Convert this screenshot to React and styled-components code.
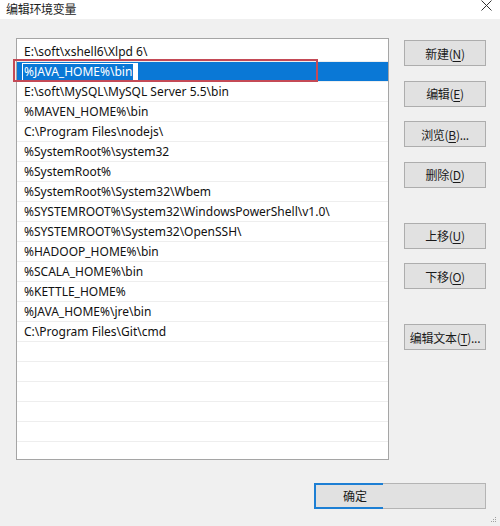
import React from "react";
import styled, { createGlobalStyle } from "styled-components";

const Global = createGlobalStyle`
  html, body { margin: 0; padding: 0; }
  body {
    width: 500px;
    height: 526px;
    overflow: hidden;
    background: #f0f0f0;
    font-family: "Noto Sans", "Noto Sans CJK SC", sans-serif;
    color: #000;
  }
`;

const Window = styled.div`
  position: relative;
  width: 500px;
  height: 526px;
  background: #f0f0f0;
  display: flex;
  flex-direction: column;
  overflow: hidden;
`;

const TitleBar = styled.div`
  height: 19px;
  flex: none;
  box-sizing: border-box;
  background: #fff;
  display: flex;
  align-items: flex-start;
  justify-content: space-between;
  padding: 2px 8px 0 6px;
  overflow: hidden;
`;

const Title = styled.div`
  font-family: "Noto Sans CJK SC", sans-serif;
  font-size: 12px;
  line-height: 13px;
  color: #1c1c1c;
  letter-spacing: -0.3px;
`;

const CloseGlyph = styled.svg`
  width: 11px;
  height: 11px;
  margin-top: -2px;
`;

const Body = styled.div`
  flex: 1;
  display: flex;
  flex-direction: column;
  padding: 19px 14px 0 16px;
`;

const Main = styled.div`
  display: flex;
  gap: 15px;
  align-items: flex-start;
`;

const ListFrame = styled.div`
  position: relative;
`;

const ListBox = styled.div`
  width: 371px;
  height: 417px;
  border: 1px solid #a5a5a5;
  background: #fff;
  padding-top: 3px;
  box-sizing: content-box;
  overflow: hidden;
`;

const Row = styled.div`
  height: 19px;
  border-bottom: 1px solid #eeeeee;
  display: flex;
  align-items: center;
  padding-left: 7px;
  font-size: 12px;
  line-height: 19px;
  white-space: nowrap;
  color: #111;
  background: ${(p) => (p.$selected ? "#0a78d6" : "transparent")};
`;

const EditBox = styled.div`
  margin-left: -2px;
  height: 18px;
  width: 116px;
  background: #fff;
  display: flex;
  align-items: center;
  padding-left: 1px;
  box-sizing: border-box;
`;

const Selection = styled.span`
  background: #0a78d6;
  color: #fff;
  line-height: 16px;
  padding: 0 1px;
`;

/* red outline drawn over the list, around the entry being edited */
const Marker = styled.div`
  position: absolute;
  left: -3px;
  top: 21px;
  width: 305px;
  height: 23px;
  box-sizing: border-box;
  border: 2px solid #c44a56;
  pointer-events: none;
`;

const Side = styled.div`
  display: flex;
  flex-direction: column;
  padding-top: 2px;
`;

const Button = styled.button`
  width: 82px;
  height: 26px;
  margin-top: ${(p) => (p.$gap ? "35px" : "14.5px")};
  &:first-child { margin-top: 0; }
  background: #e1e1e1;
  border: 1px solid #adadad;
  font-family: "Noto Sans CJK SC", sans-serif;
  font-size: 12px;
  color: #1a1a1a;
  padding: 0;
  display: flex;
  align-items: center;
  justify-content: center;
  letter-spacing: -0.3px;
  u { text-decoration: underline; text-underline-offset: 2px; }
`;

const Footer = styled.div`
  display: flex;
  justify-content: flex-end;
  margin-top: 23px;
`;

const FooterGroup = styled.div`
  width: 172px;
  height: 26px;
  display: flex;
  background: #e1e1e1;
  border: 1px solid #b4b4b4;
  border-left: none;
  box-sizing: border-box;
`;

const OkButton = styled.div`
  width: 69px;
  height: 26px;
  margin-top: -1px;
  box-sizing: border-box;
  border: 2px solid #1d7fd4;
  border-right: none;
  background: #e1e1e1;
  font-family: "Noto Sans CJK SC", sans-serif;
  font-size: 12px;
  line-height: 22px;
  padding-left: 27px;
  color: #1a1a1a;
`;

const Grip = styled.svg`
  position: absolute;
  right: 3px;
  bottom: 3px;
  width: 8px;
  height: 8px;
`;

const paths = [
  "E:\\soft\\xshell6\\Xlpd 6\\",
  "%JAVA_HOME%\\bin",
  "E:\\soft\\MySQL\\MySQL Server 5.5\\bin",
  "%MAVEN_HOME%\\bin",
  "C:\\Program Files\\nodejs\\",
  "%SystemRoot%\\system32",
  "%SystemRoot%",
  "%SystemRoot%\\System32\\Wbem",
  "%SYSTEMROOT%\\System32\\WindowsPowerShell\\v1.0\\",
  "%SYSTEMROOT%\\System32\\OpenSSH\\",
  "%HADOOP_HOME%\\bin",
  "%SCALA_HOME%\\bin",
  "%KETTLE_HOME%",
  "%JAVA_HOME%\\jre\\bin",
  "C:\\Program Files\\Git\\cmd",
];

const rows = [...paths, ...Array(6).fill("")];

const buttons = [
  { label: "新建", key: "N" },
  { label: "编辑", key: "E" },
  { label: "浏览", key: "B", tail: "..." },
  { label: "删除", key: "D" },
  { label: "上移", key: "U", gap: true },
  { label: "下移", key: "O" },
  { label: "编辑文本", key: "T", tail: "...", gap: true },
];

export default function App() {
  return (
    <Window>
      <Global />
      <TitleBar>
        <Title>编辑环境变量</Title>
        <CloseGlyph viewBox="0 0 11 11">
          <path d="M0.5 0.5 L10.5 10.5 M10.5 0.5 L0.5 10.5" stroke="#333" strokeWidth="1" fill="none" />
        </CloseGlyph>
      </TitleBar>
      <Body>
        <Main>
          <ListFrame>
            <ListBox>
              {rows.map((text, i) =>
                i === 1 ? (
                  <Row key={i} $selected>
                    <EditBox>
                      <Selection>{text}</Selection>
                    </EditBox>
                  </Row>
                ) : (
                  <Row key={i}>{text}</Row>
                )
              )}
            </ListBox>
            <Marker />
          </ListFrame>
          <Side>
            {buttons.map((b) => (
              <Button key={b.key} $gap={b.gap}>
                {b.label}(<u>{b.key}</u>){b.tail}
              </Button>
            ))}
          </Side>
        </Main>
        <Footer>
          <FooterGroup>
            <OkButton>确定</OkButton>
          </FooterGroup>
        </Footer>
      </Body>
      <Grip viewBox="0 0 8 8">
        <rect x="6" y="2" width="1" height="1" fill="#a0a0a0" />
        <rect x="4" y="4" width="1" height="1" fill="#a0a0a0" />
        <rect x="6" y="4" width="1" height="1" fill="#a0a0a0" />
        <rect x="2" y="6" width="1" height="1" fill="#a0a0a0" />
        <rect x="4" y="6" width="1" height="1" fill="#a0a0a0" />
        <rect x="6" y="6" width="1" height="1" fill="#a0a0a0" />
      </Grip>
    </Window>
  );
}
